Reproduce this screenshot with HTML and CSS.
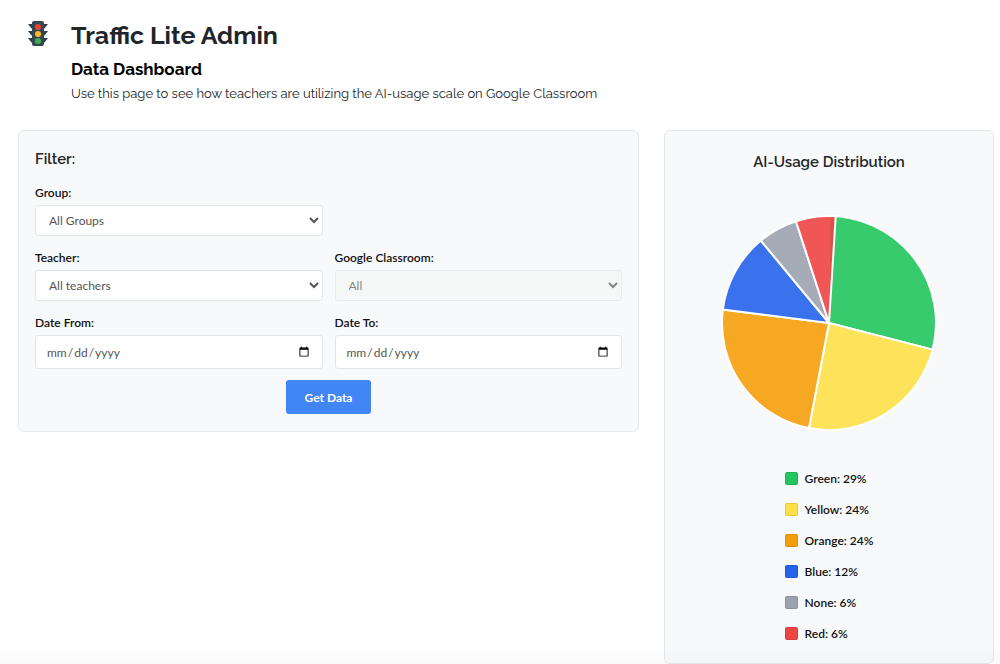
FILE: index.html
```html
<!DOCTYPE html>
<html lang="en">

<head>
  <meta charset="UTF-8">
  <meta name="viewport" content="width=device-width, initial-scale=1.0">
  <title>Traffic Lite Admin</title>
  <link rel="stylesheet" href="styles.css">
</head>

<body>
  <header class="header">
    <svg class="logo" viewBox="0 0 20 26" aria-hidden="true">
      <path d="M0 4h5v4.500H3.500zM0 11h5v4.500H3.500zM0 18h5v4.500H3.500zM20 4h-5v4.500h1.500zM20 11h-5v4.500h1.500zM20 18h-5v4.500h1.500z" fill="#2f3d44" />
      <rect x="4" y="1" width="12" height="25" rx="2" fill="#37474f" />
      <circle cx="10" cy="7" r="3" fill="#ee4238" />
      <circle cx="10" cy="14" r="3" fill="#fbb829" />
      <circle cx="10" cy="21" r="3" fill="#3aae58" />
    </svg>
    <div>
      <h1>Traffic Lite Admin</h1>
      <h2>Data Dashboard</h2>
      <p>Use this page to see how teachers are utilizing the AI-usage scale on Google Classroom</p>
    </div>
  </header>

  <main class="dashboard">
    <form class="card filters">
      <h3>Filter:</h3>
      <div class="filter-grid">
        <div class="form-group first">
          <label for="group">Group:</label>
          <select id="group">
            <option>All Groups</option>
          </select>
        </div>
        <div class="form-group first">
          <label for="teacher">Teacher:</label>
          <select id="teacher">
            <option>All teachers</option>
          </select>
        </div>
        <div class="form-group">
          <label for="classroom">Google Classroom:</label>
          <select id="classroom" disabled>
            <option>All</option>
          </select>
        </div>
        <div class="form-group">
          <label for="dateFrom">Date From:</label>
          <input type="date" id="dateFrom">
        </div>
        <div class="form-group">
          <label for="dateTo">Date To:</label>
          <input type="date" id="dateTo">
        </div>
      </div>
      <button type="button" class="submit">Get Data</button>
    </form>

    <section class="card chart">
      <h3>AI-Usage Distribution</h3>
      <svg class="pie" id="pie" viewBox="-108 -108 216 216" role="img" aria-label="AI-Usage Distribution"></svg>
      <ul class="legend">
        <li><span class="swatch green"></span>Green: 29%</li>
        <li><span class="swatch yellow"></span>Yellow: 24%</li>
        <li><span class="swatch orange"></span>Orange: 24%</li>
        <li><span class="swatch blue"></span>Blue: 12%</li>
        <li><span class="swatch none"></span>None: 6%</li>
        <li><span class="swatch red"></span>Red: 6%</li>
      </ul>
    </section>
  </main>

  <script src="script.js"></script>
</body>

</html>
```
FILE: styles.css
```css
* {
  box-sizing: border-box;
}

body {
  margin: 0;
  padding: 16px 6px 0 18px;
  font-family: Lato, sans-serif;
  font-size: 12px;
  color: #212529;
  background-color: #fff;
}

/* soft fade along the bottom edge of the window */
body::after {
  content: "";
  position: fixed;
  left: 0;
  right: 0;
  bottom: 0;
  height: 20px;
  background: linear-gradient(transparent, rgba(0, 0, 0, 0.02));
  pointer-events: none;
}

h1,
h2,
h3,
p {
  margin: 0;
  font-family: Raleway, Lato, sans-serif;
}

.header {
  display: flex;
  gap: 23px;
  padding-left: 10px;
  margin-bottom: 26px;
}

.logo {
  width: 20px;
  height: 26px;
  margin-top: 4px;
}

h1 {
  font-size: 25px;
  line-height: 38px;
}

h2 {
  font-size: 17px;
  line-height: 30px;
  color: #000;
}

h3 {
  font-size: 15px;
  line-height: 20px;
  font-weight: 600;
}

p {
  font-size: 13px;
  line-height: 20px;
}

.dashboard {
  display: grid;
  grid-template-columns: minmax(0, 1fr) 330px;
  gap: 25px;
  align-items: start;
}

.card {
  padding: 18px 16px 17px;
  border: 1px solid #e5e8eb;
  border-radius: 6px;
  background-color: #f8f9fb;
}

.filter-grid {
  display: grid;
  grid-template-columns: 1fr 1fr;
  gap: 13px 12px;
  margin-top: 15px;
}

.first {
  grid-column: 1;
}

.form-group label {
  display: block;
  margin-bottom: 4px;
  font-weight: 600;
  line-height: 17px;
  color: #111;
}

.form-group select,
.form-group input {
  display: block;
  width: 100%;
  border: 1px solid #e2e5e8;
  border-radius: 3px;
  background-color: #fff;
  font-family: inherit;
  font-size: 12px;
  color: #555;
}

.form-group select {
  height: 31px;
  padding: 0 0 0 9px;
}

.form-group select:disabled {
  background-color: #f5f5f5;
}

.form-group input {
  height: 34px;
  padding: 0 10px;
}

.submit {
  display: block;
  height: 34px;
  margin: 11px auto 0;
  padding: 0 19px;
  border: none;
  border-radius: 3px;
  background-color: #4285f4;
  color: #fff;
  font-family: inherit;
  font-size: 12px;
  font-weight: 700;
  cursor: pointer;
}

.chart {
  display: flex;
  flex-direction: column;
  align-items: center;
  padding: 21px 16px;
}

.pie {
  width: 216px;
  height: 216px;
  margin: 43px 0 39px;
}

.pie path {
  fill-opacity: 0.9;
  stroke: #fff;
  stroke-width: 2;
}

.legend {
  margin: 0;
  padding: 0;
  list-style: none;
}

.legend li {
  display: flex;
  align-items: center;
  gap: 7px;
  height: 17px;
  margin-bottom: 14px;
  font-weight: 600;
  color: #111;
}

.legend li:last-child {
  margin-bottom: 0;
}

.swatch {
  width: 13px;
  height: 13px;
  border: 1px solid rgba(0, 0, 0, 0.1);
  border-radius: 2px;
}

.green {
  background-color: #22c55e;
}

.yellow {
  background-color: #fde047;
}

.orange {
  background-color: #f59e0b;
}

.blue {
  background-color: #2563eb;
}

.none {
  background-color: #9ca3af;
}

.red {
  background-color: #ef4444;
}
```
FILE: script.js
```js
const slices = [
  { value: 29, color: '#22c55e' },
  { value: 24, color: '#fde047' },
  { value: 24, color: '#f59e0b' },
  { value: 12, color: '#2563eb' },
  { value: 6, color: '#9ca3af' },
  { value: 6, color: '#ef4444' }
];

const radius = 107;

function point(percent) {
  const angle = (percent / 100) * 2 * Math.PI;
  return `${radius * Math.sin(angle)} ${-radius * Math.cos(angle)}`;
}

function drawPie() {
  const pie = document.getElementById('pie');
  let start = 0;

  slices.forEach(slice => {
    const path = document.createElementNS('http://www.w3.org/2000/svg', 'path');
    const end = start + slice.value;
    path.setAttribute('d', `M0 0L${point(start)}A${radius} ${radius} 0 0 1 ${point(end)}Z`);
    path.setAttribute('fill', slice.color);
    pie.appendChild(path);
    start = end;
  });
}

drawPie();
```
